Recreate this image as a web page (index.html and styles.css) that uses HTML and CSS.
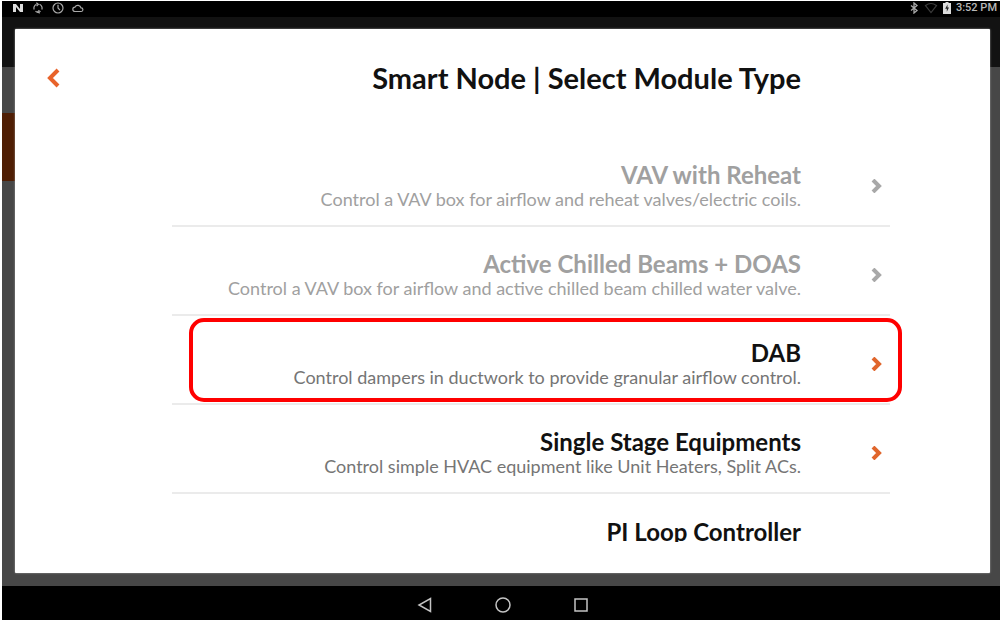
FILE: index.html
```html
<!DOCTYPE html>
<html lang="en">
<head>
    <meta charset="UTF-8">
    <meta name="viewport" content="width=device-width, initial-scale=1.0">
    <title>Select Module Type</title>
    <link rel="stylesheet" href="styles.css">
</head>
<body>
    <div class="status-bar">
        <div class="status-icons">
            <svg width="12" height="12" viewBox="0 0 12 12"><path d="M1 10V2h3l4 5V2h3v8H8L4 5v5z" fill="#ddd"/></svg>
            <svg width="12" height="12" viewBox="0 0 12 12" fill="none" stroke="#aaa" stroke-width="1.2"><path d="M2.200 7.500A4 4 0 0 1 4.500 2.300M7.500 2.300A4 4 0 0 1 9.800 7.500M3.500 9.300a4 4 0 0 0 5 0"/><path d="M4.300.8L6.300 2.400 4.600 4M7.700 11.200L5.700 9.900 7.400 8.200"/></svg>
            <svg width="12" height="12" viewBox="0 0 12 12" fill="none" stroke="#aaa" stroke-width="1.2"><circle cx="6" cy="6" r="5"/><path d="M6 2.800V6l2 2.200"/></svg>
            <svg width="12" height="12" viewBox="0 0 12 12" fill="none" stroke="#aaa" stroke-width="1.2"><path d="M3 9.500a2.200 2.200 0 0 1 0-4.400 3.200 3.200 0 0 1 6 .8 1.800 1.800 0 0 1 .2 3.600z"/></svg>
        </div>
        <div class="status-icons status-right">
            <svg width="10" height="12" viewBox="0 0 10 12" fill="none" stroke="#aaa" stroke-width="1.300"><path d="M2 3.500l6 5-3 2.500V1l3 2.500-6 5"/></svg>
            <svg width="14" height="12" viewBox="0 0 14 12" fill="none" stroke="#3c3c3c" stroke-width="1.200"><path d="M1.500 3.500Q7-.5 12.500 3.500L7 10.500z"/></svg>
            <svg width="8" height="12" viewBox="0 0 8 12"><path d="M0 1h2.500V0h3v1H8v11H0z" fill="#ddd"/><path d="M4.500 2.500L2.200 6.800h1.600v3l2.200-4.300H4.500z" fill="#222"/></svg>
            <span class="clock">3:52 PM</span>
        </div>
    </div>

    <div class="app">
        <div class="app-bar"></div>
        <div class="side-tab"></div>

        <div class="dialog">
            <div class="dialog-header">
                <button class="back" aria-label="Back">
                    <svg width="14" height="20" viewBox="0 0 14 20" fill="none" stroke="#e8632b" stroke-width="4"><path d="M11 2L3 10l8 8"/></svg>
                </button>
                <h1>Smart Node | Select Module Type</h1>
            </div>
            <div class="module-list">
                <a href="#" class="module disabled">
                    <span class="module-text">
                        <span class="module-name">VAV with Reheat</span>
                        <span class="module-desc">Control a VAV box for airflow and reheat valves/electric coils.</span>
                    </span>
                    <svg class="arrow" width="12" height="14" viewBox="0 0 12 14"><path d="M3 1l6 6-6 6"/></svg>
                </a>
                <a href="#" class="module disabled">
                    <span class="module-text">
                        <span class="module-name">Active Chilled Beams + DOAS</span>
                        <span class="module-desc">Control a VAV box for airflow and active chilled beam chilled water valve.</span>
                    </span>
                    <svg class="arrow" width="12" height="14" viewBox="0 0 12 14"><path d="M3 1l6 6-6 6"/></svg>
                </a>
                <a href="#" class="module highlighted">
                    <span class="module-text">
                        <span class="module-name">DAB</span>
                        <span class="module-desc">Control dampers in ductwork to provide granular airflow control.</span>
                    </span>
                    <svg class="arrow" width="12" height="14" viewBox="0 0 12 14"><path d="M3 1l6 6-6 6"/></svg>
                </a>
                <a href="#" class="module">
                    <span class="module-text">
                        <span class="module-name">Single Stage Equipments</span>
                        <span class="module-desc">Control simple HVAC equipment like Unit Heaters, Split ACs.</span>
                    </span>
                    <svg class="arrow" width="12" height="14" viewBox="0 0 12 14"><path d="M3 1l6 6-6 6"/></svg>
                </a>
                <a href="#" class="module last">
                    <span class="module-text">
                        <span class="module-name">PI Loop Controller</span>
                    </span>
                </a>
            </div>
        </div>
    </div>

    <div class="nav-bar">
        <button aria-label="Back">
            <svg width="16" height="16" viewBox="0 0 16 16"><path d="M13.500 1.500v13L2 8z"/></svg>
        </button>
        <button aria-label="Home">
            <svg width="16" height="16" viewBox="0 0 16 16"><circle cx="8" cy="8" r="7"/></svg>
        </button>
        <button aria-label="Recent apps">
            <svg width="16" height="16" viewBox="0 0 16 16"><path d="M2 2h12v12H2z"/></svg>
        </button>
    </div>
</body>
</html>
```
FILE: styles.css
```css
* {
    box-sizing: border-box;
}
body {
    font-family: Lato, "Liberation Sans", sans-serif;
    background-color: #ffffff;
    margin: 0;
    padding: 1px 0 0 2px;
    height: 100vh;
    display: flex;
    flex-direction: column;
    overflow: hidden;
}
button {
    background: none;
    border: none;
    padding: 0;
    cursor: pointer;
}
svg {
    display: block;
}

/* status bar */
.status-bar {
    background-color: #000000;
    height: 16px;
    padding: 0 3px 2px 10px;
    display: flex;
    justify-content: space-between;
    align-items: center;
}
.status-icons {
    display: flex;
    align-items: center;
    gap: 8px;
}
.status-right {
    gap: 5px;
}
.clock {
    font-family: Roboto, sans-serif;
    font-size: 11px;
    line-height: 12px;
    font-weight: 500;
    color: #b8b8b8;
}

/* screen behind the dialog */
.app {
    background-color: #474747;
    flex: 1;
    min-height: 0;
    position: relative;
}
.app-bar {
    background-color: #121212;
    height: 50px;
}
.side-tab {
    background-color: #4f1e04;
    width: 13px;
    height: 68px;
    margin-top: 46px;
}

/* dialog */
.dialog {
    background-color: #ffffff;
    position: absolute;
    top: 12px;
    right: 10px;
    bottom: 13px;
    left: 13px;
    padding-bottom: 31px;
    border-radius: 1px;
    box-shadow: 0 0 2px #aaaaaa;
    display: flex;
    flex-direction: column;
}
.dialog-header {
    height: 109px;
    padding: 31px 189px 0 32px;
    display: flex;
    justify-content: space-between;
    align-items: flex-start;
}
.dialog-header h1 {
    margin: 0;
    font-size: 29px;
    line-height: 36px;
    font-weight: bold;
    color: #111111;
}
.back {
    padding: 8px 0;
}
.module-list {
    flex: 1;
    min-height: 0;
    margin: 0 100px 0 157px;
}
.module {
    position: relative;
    height: 89px;
    padding-right: 8px;
    border-bottom: 2px solid #ebebeb;
    display: flex;
    justify-content: flex-end;
    align-items: center;
    gap: 69px;
    text-align: right;
    text-decoration: none;
    color: #111111;
}
.module-text {
    display: flex;
    flex-direction: column;
    padding-top: 9px;
}
.module-name {
    font-size: 24px;
    line-height: 26px;
    font-weight: bold;
}
.module-desc {
    font-size: 18px;
    line-height: 22px;
    color: #757575;
}
.arrow {
    margin-top: 8px;
    fill: none;
    stroke: #e0662c;
    stroke-width: 4;
}
.disabled .module-name,
.disabled .module-desc {
    color: #a0a0a0;
}
.disabled .arrow {
    stroke: #a8a8a8;
}
.module.last {
    height: 48px;
    padding-right: 89px;
    border-bottom: none;
    align-items: flex-start;
    overflow: hidden;
}
.last .module-text {
    padding-top: 25px;
}

/* red frame round the chosen module */
.highlighted::after {
    content: "";
    position: absolute;
    top: 2px;
    right: -12px;
    bottom: 1px;
    left: 17px;
    border: 4px solid #ff0000;
    border-radius: 15px;
}

/* android navigation */
.nav-bar {
    background-color: #000000;
    height: 34px;
    padding: 3px 0 0 3px;
    display: flex;
    justify-content: center;
    align-items: center;
    gap: 62px;
}
.nav-bar svg {
    fill: none;
    stroke: #c4c4c4;
    stroke-width: 1.5;
}
```
